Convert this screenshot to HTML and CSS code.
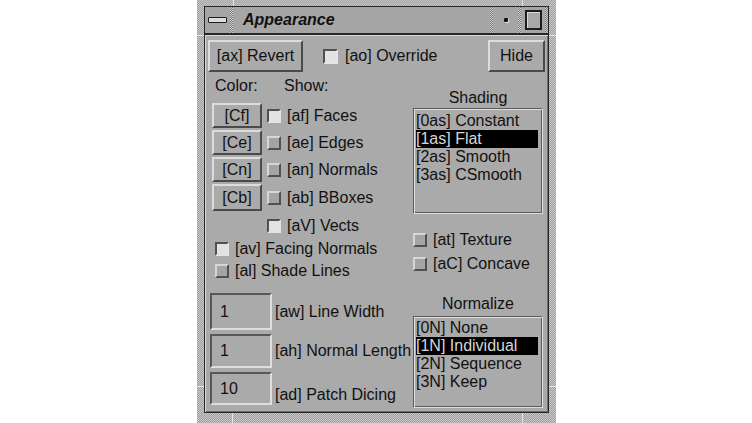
FILE: index.html
```html
<!DOCTYPE html>
<html lang="en">
<head>
  <meta charset="UTF-8">
  <title>Appearance</title>
  <link rel="stylesheet" href="styles.css">
</head>
<body>
  <div class="window">
    <span class="tick tick-v top-l"></span>
    <span class="tick tick-v top-r"></span>
    <span class="tick tick-v bot-l"></span>
    <span class="tick tick-v bot-r"></span>
    <span class="tick tick-h side-lt"></span>
    <span class="tick tick-h side-rt"></span>
    <span class="tick tick-h side-lb"></span>
    <span class="tick tick-h side-rb"></span>

    <div class="frame">
      <div class="titlebar">
        <div class="tb-menu"><span class="menu-bar"></span></div>
        <div class="sep"></div>
        <div class="tb-title">Appearance</div>
        <div class="sep"></div>
        <div class="tb-min"><span class="dot"></span></div>
        <div class="sep"></div>
        <div class="tb-max"><span class="max-box"></span></div>
        <div class="sep"></div>
      </div>

      <div class="panel">
        <div class="toprow">
          <div class="btn revert">[ax] Revert</div>
          <div class="override"><span class="cb big on"></span>[ao] Override</div>
          <div class="btn hide">Hide</div>
        </div>

        <div class="body">
          <div class="leftcol">
            <div class="heads"><span class="h-color">Color:</span><span>Show:</span></div>

            <div class="showgrid">
              <div class="srow"><div class="btn cbtn">[Cf]</div><span class="cb on"></span><span>[af] Faces</span></div>
              <div class="srow"><div class="btn cbtn">[Ce]</div><span class="cb"></span><span>[ae] Edges</span></div>
              <div class="srow"><div class="btn cbtn">[Cn]</div><span class="cb"></span><span>[an] Normals</span></div>
              <div class="srow tall"><div class="btn cbtn">[Cb]</div><span class="cb"></span><span>[ab] BBoxes</span></div>
              <div class="srow vects"><span class="cb on"></span><span>[aV] Vects</span></div>
            </div>

            <div class="opts">
              <div class="orow"><span class="cb on"></span>[av] Facing Normals</div>
              <div class="orow"><span class="cb"></span>[al] Shade Lines</div>
            </div>

            <div class="fields">
              <div class="frow f1"><div class="field">1</div><span>[aw] Line Width</span></div>
              <div class="frow f2"><div class="field">1</div><span>[ah] Normal Length</span></div>
              <div class="frow f3"><div class="field">10</div><span class="low">[ad] Patch Dicing</span></div>
            </div>
          </div>

          <div class="rightcol">
            <div class="caption cap-shading">Shading</div>
            <ul class="list shading">
              <li>[0as] Constant</li>
              <li class="sel">[1as] Flat</li>
              <li>[2as] Smooth</li>
              <li>[3as] CSmooth</li>
            </ul>

            <div class="orow texture"><span class="cb"></span>[at] Texture</div>
            <div class="orow concave"><span class="cb"></span>[aC] Concave</div>

            <div class="caption cap-normalize">Normalize</div>
            <ul class="list normalize">
              <li>[0N] None</li>
              <li class="sel">[1N] Individual</li>
              <li>[2N] Sequence</li>
              <li>[3N] Keep</li>
            </ul>
          </div>
        </div>
      </div>
    </div>
  </div>
</body>
</html>
```

FILE: styles.css
```css
html, body {
  margin: 0;
  padding: 0;
  background: #fff;
}

body {
  font-family: "Liberation Sans", Arial, sans-serif;
  font-size: 16px;
  color: #111;
}

/* window frame */
.window {
  position: relative;
  width: 359px;
  height: 423px;
  margin-left: 197px;
  box-sizing: border-box;
  padding: 6px 7px 10px 7px;
  background-color: #b2b2b2;
  background-image: repeating-conic-gradient(#c8c8c8 0 25%, #a0a0a0 0 50%);
  background-size: 2px 2px;
  display: flex;
}

.tick {
  position: absolute;
  background: #e6e6e6;
}
.tick-v { width: 1px; }
.tick-h { height: 1px; }
.top-l { left: 36px; top: 0; height: 6px; }
.top-r { left: 325px; top: 0; height: 6px; }
.bot-l { left: 35px; top: 413px; height: 10px; }
.bot-r { left: 325px; top: 413px; height: 10px; }
.side-lt { left: 0; top: 35px; width: 7px; }
.side-rt { left: 352px; top: 35px; width: 7px; }
.side-lb { left: 0; top: 386px; width: 7px; }
.side-rb { left: 352px; top: 386px; width: 7px; }

.frame {
  flex: 1;
  display: flex;
  flex-direction: column;
  border: 1px solid #262626;
}

/* title bar */
.titlebar {
  height: 26px;
  display: flex;
  background: #a6a6a6;
  border-bottom: 2px solid #262626;
}

.sep {
  width: 3px;
  background-color: #9a9a9a;
  background-image: repeating-conic-gradient(#cfcfcf 0 25%, #7a7a7a 0 50%);
  background-size: 2px 2px;
}

.tb-menu {
  width: 25px;
  display: flex;
  align-items: center;
  justify-content: center;
}

.menu-bar {
  width: 19px;
  height: 6px;
  box-sizing: border-box;
  border: 1px solid #1c1c1c;
  border-radius: 1px;
  background: #dcdcdc;
}

.tb-title {
  flex: 1;
  padding-left: 10px;
  font-weight: bold;
  font-style: italic;
  line-height: 26px;
  color: #111;
}

.tb-min {
  width: 25px;
  display: flex;
  align-items: center;
  justify-content: center;
}

.dot {
  width: 4px;
  height: 4px;
  background: #111;
  border-radius: 1px;
  box-shadow: 1px 1px 0 #e0e0e0;
}

.tb-max {
  width: 24px;
  display: flex;
  align-items: center;
  justify-content: center;
}

.max-box {
  width: 17px;
  height: 20px;
  box-sizing: border-box;
  border: 2px solid #1c1c1c;
  background: #a8a8a8;
  box-shadow: inset 1px 1px 0 #d8d8d8;
}

/* panel */
.panel {
  flex: 1;
  background: #aaaaaa;
  box-shadow: inset 1px 1px 0 #d8d8d8, inset -1px -1px 0 #6c6c6c;
  padding: 5px 3px 0 3px;
}

.btn {
  box-sizing: border-box;
  display: flex;
  align-items: center;
  justify-content: center;
  border: 2px solid;
  border-color: #dcdcdc #4a4a4a #4a4a4a #dcdcdc;
  background: #aaaaaa;
  white-space: nowrap;
}

.toprow {
  height: 32px;
  display: flex;
  align-items: center;
}

.revert {
  width: 95px;
  height: 32px;
}

.override {
  margin-left: 20px;
  display: flex;
  align-items: center;
  gap: 7px;
}

.hide {
  margin-left: auto;
  width: 57px;
  height: 32px;
}

/* check boxes */
.cb {
  width: 14px;
  height: 14px;
  box-sizing: border-box;
  flex: none;
  border: 2px solid;
  border-color: #d6d6d6 #505050 #505050 #d6d6d6;
  background: #a4a4a4;
}

.cb.on {
  border-color: #505050 #e4e4e4 #e4e4e4 #505050;
  background: #e2e2e2;
}

.cb.big {
  width: 15px;
  height: 15px;
}

.body {
  display: flex;
}

/* left column */
.leftcol {
  width: 205px;
}

.heads {
  margin-top: 5px;
  height: 18px;
  line-height: 18px;
  padding-left: 7px;
  display: flex;
}

.h-color {
  width: 69px;
}

.showgrid {
  margin-top: 8px;
  display: flex;
  flex-direction: column;
  gap: 2px;
}

.srow {
  height: 25px;
  display: flex;
  align-items: center;
  padding-left: 4px;
  white-space: nowrap;
}

.srow.tall { height: 27px; }

.srow.vects {
  height: 26px;
  padding-left: 59px;
}

.cbtn {
  width: 50px;
  height: 100%;
  margin-right: 5px;
}

.srow .cb {
  margin-right: 6px;
}

.opts {
  margin-top: 1px;
  display: flex;
  flex-direction: column;
  gap: 4px;
}

.orow {
  height: 18px;
  display: flex;
  align-items: center;
  gap: 6px;
  white-space: nowrap;
}

.opts .orow {
  padding-left: 7px;
}

.fields {
  margin-top: 13px;
  display: flex;
  flex-direction: column;
  gap: 4px;
  padding-left: 2px;
}

.frow {
  display: flex;
  align-items: center;
  gap: 3px;
  white-space: nowrap;
}

.f1 { height: 37px; }
.f2 { height: 34px; }
.f3 { height: 33px; }

.field {
  width: 62px;
  height: 100%;
  box-sizing: border-box;
  border: 2px solid;
  border-color: #585858 #dedede #dedede #585858;
  padding-left: 8px;
  display: flex;
  align-items: center;
}

.low {
  padding-top: 13px;
}

/* right column */
.rightcol {
  width: 130px;
}

.caption {
  height: 18px;
  line-height: 18px;
  text-align: center;
}

.cap-shading { margin-top: 17px; }
.cap-normalize { margin-top: 22px; }

.list {
  margin: 0;
  list-style: none;
  box-sizing: border-box;
  border: 1px solid;
  border-color: #5c5c5c #dedede #dedede #5c5c5c;
  box-shadow: inset 1px 1px 0 #dedede, inset -1px -1px 0 #5c5c5c;
  padding: 3px 4px 0 2px;
}

.list li {
  height: 18px;
  line-height: 18px;
  white-space: nowrap;
}

.list .sel {
  background: #000;
  color: #d6d6d6;
}

.shading {
  margin-top: 1px;
  height: 106px;
}

.normalize {
  margin-top: 3px;
  height: 92px;
  padding-top: 2px;
}

.texture { margin-top: 17px; }
.concave { margin-top: 6px; }
```
